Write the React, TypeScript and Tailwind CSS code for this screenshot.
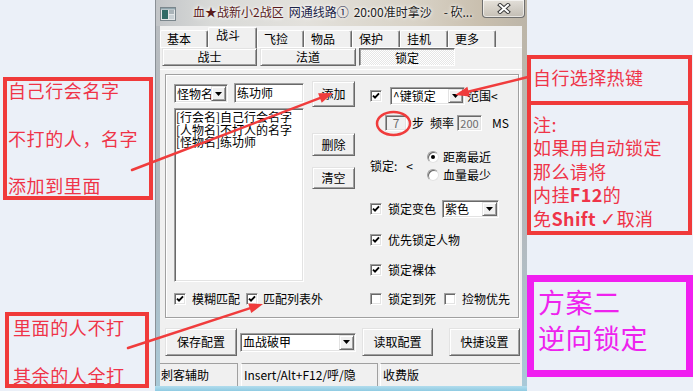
import React from "react";

const raised =
  "bg-[#f0f0f0] border border-t-[#e3e3e3] border-l-[#e3e3e3] border-r-[#696969] border-b-[#696969] shadow-[inset_1px_1px_0_#ffffff,inset_-1px_-1px_0_#a0a0a0]";
const sunken =
  "border border-t-[#a0a0a0] border-l-[#a0a0a0] border-r-white border-b-white shadow-[inset_1px_1px_0_#696969,inset_-1px_-1px_0_#e3e3e3]";

function Check({ checked }: { checked?: boolean }) {
  return (
    <span className={`w-[12px] h-[12px] shrink-0 bg-white ${sunken} flex items-center justify-center`}>
      {checked && (
        <svg width="8" height="8" viewBox="0 0 8 8">
          <path d="M1 3.6 L3 5.6 L7 1.4" stroke="#000" strokeWidth="1.9" fill="none" />
        </svg>
      )}
    </span>
  );
}

function Radio({ on }: { on?: boolean }) {
  return (
    <span className="w-[12px] h-[12px] shrink-0 rounded-full bg-white border border-t-[#a0a0a0] border-l-[#a0a0a0] border-r-[#e3e3e3] border-b-[#e3e3e3] shadow-[inset_1px_1px_0_#696969] flex items-center justify-center">
      {on && <span className="w-[4px] h-[4px] rounded-full bg-black" />}
    </span>
  );
}

function DropBtn() {
  return (
    <span className={`w-[15px] self-stretch my-[1px] mr-[1px] ${raised} flex items-center justify-center shrink-0`}>
      <svg width="7" height="4" viewBox="0 0 7 4">
        <path d="M0 0 H7 L3.5 4 Z" fill="#000" />
      </svg>
    </span>
  );
}

function CheckRow({ label, checked }: { label: string; checked?: boolean }) {
  return (
    <div className="flex items-center h-[14px] whitespace-nowrap">
      <Check checked={checked} />
      <span className="ml-[6px]">{label}</span>
    </div>
  );
}

function TitleBar() {
  return (
    <div className="h-[26px] flex items-start bg-[linear-gradient(90deg,#c2c5c8_0%,#d9dad8_15%,#e3e1dc_40%,#d8d2c6_70%,#c9bfae_88%,#bcb5a8_100%)] border-l border-[#8a9096]">
      <svg className="mt-[7px] ml-[4px]" width="16" height="14" viewBox="0 0 16 14">
        <rect x="0.5" y="0.5" width="15" height="13" fill="#e2e6e8" stroke="#7a868c" />
        <rect x="2" y="3" width="6" height="9" fill="#2f6a66" />
        <rect x="9" y="3" width="5" height="4" fill="#a9b3b8" />
        <rect x="9" y="8" width="5" height="4" fill="#c8d0d4" />
        <rect x="1" y="1" width="14" height="1.5" fill="#8fa4ac" />
      </svg>
      <div className="ml-[17px] mt-[5px] text-[12px] leading-[14px] whitespace-nowrap [text-shadow:0_0_5px_#ffffff,0_0_3px_#ffffff]">
        <span className="text-[#5a1c1c]">血★战新小2战区</span>
        <span className="ml-[5px] text-[#1c2448]">网通线路①</span>
        <span className="ml-[5px] text-[#1c1c1c]">20:00准时拿沙</span>
        <span className="ml-[12px] text-[#1c1c1c]">- 砍...</span>
      </div>
      <div className="ml-auto mr-[2px] w-[43px] h-[18px] rounded-b-[4px] border border-t-0 border-[#6e6e6e] bg-[linear-gradient(180deg,rgba(255,255,255,0.55),rgba(200,200,200,0.35))] shadow-[inset_0_0_0_1px_rgba(255,255,255,0.6)] flex items-center justify-center">
        <svg width="14" height="11" viewBox="0 0 14 11">
          <path d="M3 2 L11 9 M11 2 L3 9" stroke="#3a3a3a" strokeWidth="4" strokeLinecap="square" />
          <path d="M3 2 L11 9 M11 2 L3 9" stroke="#ffffff" strokeWidth="2" strokeLinecap="square" />
        </svg>
      </div>
    </div>
  );
}

const tabBase =
  "h-[17px] pl-[6px] flex items-center bg-[#f0f0f0] border-t border-l border-r border-t-white border-l-white border-r-[#696969] shadow-[inset_-1px_0_0_#a0a0a0] rounded-t-[2px]";

function Client() {
  return (
    <div className="w-[362px] h-[360px] bg-[#f0f0f0] flex flex-col text-[12px] leading-[14px] text-black">
      {/* tabs */}
      <div className="h-[22px] flex items-end border-b border-white">
        <div className={`${tabBase} w-[48px]`}>基本</div>
        <div className="relative z-10 -mb-px h-[21px] w-[49px] pl-[7px] bg-[#f0f0f0] border-t border-l border-r border-t-white border-l-white border-r-[#696969] shadow-[inset_-1px_0_0_#a0a0a0] rounded-t-[2px]">
          战斗
        </div>
        <div className={`${tabBase} w-[47px] pl-[4px]`}>飞捡</div>
        <div className={`${tabBase} w-[48px]`}>物品</div>
        <div className={`${tabBase} w-[48px]`}>保护</div>
        <div className={`${tabBase} w-[48px]`}>挂机</div>
        <div className={`${tabBase} w-[48px]`}>更多</div>
      </div>
      {/* sub tabs */}
      <div className="h-[19px] flex items-start">
        <div className={`ml-[2px] w-[95px] h-[18px] ${raised} flex items-center justify-center`}>战士</div>
        <div className={`ml-[3px] w-[96px] h-[18px] ${raised} flex items-center justify-center`}>法道</div>
        <div className="ml-[3px] w-[96px] h-[18px] border border-t-[#696969] border-l-[#696969] border-r-white border-b-white shadow-[inset_1px_1px_0_#a0a0a0] bg-[repeating-conic-gradient(#ffffff_0_25%,#e6e6e6_0_50%)] bg-[length:2px_2px] flex items-center justify-center pt-[1px]">
          锁定
        </div>
      </div>
      <div className="h-[7px] flex flex-col">
        <div className="mt-[2px] h-px bg-white" />
      </div>
      {/* panel */}
      <div className="ml-[5px] w-[354px] h-[244px] border border-[#a0a0a0] shadow-[inset_1px_1px_0_#ffffff,1px_1px_0_#ffffff] flex">
        {/* list column */}
        <div className="ml-[8px] w-[130px] flex flex-col">
          <div className="mt-[8px] h-[20px] flex items-start">
            <div className={`mt-[1px] w-[54px] h-[19px] bg-white ${sunken} flex items-stretch`}>
              <span className="pl-[2px] flex-1 overflow-hidden whitespace-nowrap flex items-center">怪物名</span>
              <DropBtn />
            </div>
            <div className={`ml-[6px] w-[70px] h-[20px] bg-white ${sunken} pl-[2px] flex items-center`}>练功师</div>
          </div>
          <div className={`mt-[5px] h-[174px] bg-white ${sunken} pl-[1px] pt-[2px] flex flex-col leading-[12.5px] whitespace-nowrap`}>
            <div>[行会名]自己行会名字</div>
            <div>[人物名]不打人的名字</div>
            <div>[怪物名]练功师</div>
          </div>
          <div className="mt-[11px] flex items-center h-[12px] whitespace-nowrap">
            <Check checked />
            <span className="ml-[6px]">模糊匹配</span>
            <span className="ml-[6px]">
              <Check checked />
            </span>
            <span className="ml-[5px]">匹配列表外</span>
          </div>
        </div>
        {/* buttons column */}
        <div className="ml-[8px] w-[43px] flex flex-col">
          <div className={`mt-[6px] h-[26px] ${raised} flex items-center justify-center`}>添加</div>
          <div className={`mt-[26px] h-[23px] ${raised} flex items-center justify-center`}>删除</div>
          <div className={`mt-[11px] h-[22px] ${raised} flex items-center justify-center`}>清空</div>
        </div>
        {/* right column */}
        <div className="ml-[15px] flex-1 flex flex-col whitespace-nowrap">
          <div className="mt-[12px] h-[18px] flex items-center">
            <Check checked />
            <div className={`ml-[8px] w-[75px] h-[18px] bg-white ${sunken} flex items-stretch`}>
              <span className="pl-[2px] flex-1 flex items-center">^键锁定</span>
              <DropBtn />
            </div>
            <span className="ml-[2px]">范围&lt;</span>
          </div>
          <div className="mt-[10px] h-[16px] flex items-center">
            <div className={`ml-[15px] w-[22px] h-[16px] ${sunken} flex items-center justify-center text-[#6d6d6d]`}>7</div>
            <span className="ml-[5px]">步</span>
            <span className="ml-[6px]">频率</span>
            <div className={`ml-[3px] w-[25px] h-[16px] ${sunken} flex items-center justify-center text-[#6d6d6d] text-[11px]`}>200</div>
            <span className="ml-[10px]">MS</span>
          </div>
          <div className="mt-[17px] h-[36px] flex items-center">
            <div className="w-[57px] flex items-center">
              <span>锁定:</span>
              <span className="ml-[9px]">&lt;</span>
            </div>
            <div className="flex flex-col">
              <div className="h-[18px] flex items-center">
                <Radio on />
                <span className="ml-[4px]">距离最近</span>
              </div>
              <div className="h-[18px] flex items-center">
                <Radio />
                <span className="ml-[4px]">血量最少</span>
              </div>
            </div>
          </div>
          <div className="mt-[16px] h-[18px] flex items-center">
            <Check checked />
            <span className="ml-[6px]">锁定变色</span>
            <div className={`ml-[6px] w-[57px] h-[18px] bg-white ${sunken} flex items-stretch`}>
              <span className="pl-[2px] flex-1 flex items-center">紫色</span>
              <DropBtn />
            </div>
          </div>
          <div className="mt-[15px]">
            <CheckRow label="优先锁定人物" checked />
          </div>
          <div className="mt-[16px]">
            <CheckRow label="锁定裸体" checked />
          </div>
          <div className="mt-[15px] h-[14px] flex items-center">
            <Check />
            <span className="ml-[6px]">锁定到死</span>
            <span className="ml-[8px]">
              <Check />
            </span>
            <span className="ml-[6px]">捡物优先</span>
          </div>
        </div>
      </div>
      {/* bottom buttons */}
      <div className="mt-[10px] h-[28px] flex items-center">
        <div className={`ml-[5px] w-[72px] h-[28px] ${raised} flex items-center justify-center`}>保存配置</div>
        <div className={`ml-[3px] w-[116px] h-[19px] bg-white ${sunken} flex items-stretch`}>
          <span className="pl-[2px] flex-1 flex items-center">血战破甲</span>
          <DropBtn />
        </div>
        <div className={`ml-[6px] w-[71px] h-[28px] ${raised} flex items-center justify-center`}>读取配置</div>
        <div className={`ml-[16px] w-[71px] h-[28px] ${raised} flex items-center justify-center`}>快捷设置</div>
      </div>
      {/* status bar */}
      <div className="mt-[7px] h-[23px] flex">
        <div className="w-[78px] border-t border-r border-t-[#a0a0a0] border-r-[#a0a0a0] pl-[1px] flex items-center whitespace-nowrap">刺客辅助</div>
        <div className="ml-[3px] w-[137px] border-t border-l border-r border-t-[#a0a0a0] border-l-white border-r-[#a0a0a0] pl-[2px] flex items-center whitespace-nowrap">
          Insert/Alt+F12/呼/隐
        </div>
        <div className="ml-[2px] w-[140px] border-t border-l border-t-[#a0a0a0] border-l-white pl-[2px] flex items-center">收费版</div>
      </div>
    </div>
  );
}

function Window() {
  return (
    <div className="w-[372px] shrink-0 flex flex-col">
      <TitleBar />
      <div className="h-[360px] flex">
        <div className="w-[5px] border-l border-[#8a9096] bg-[linear-gradient(180deg,#b9bdc1,#aeb6bc_55%,#a9c9d8)]" />
        <Client />
        <div className="w-[5px] bg-[linear-gradient(180deg,#bdb6a8,#b4b8bc_55%,#a9c9d8)]" />
      </div>
      <div className="h-[5px] bg-[linear-gradient(180deg,#b2dced,#8fcbe2)]" />
    </div>
  );
}

export default function App() {
  return (
    <div className="relative w-[693px] h-[391px] overflow-hidden bg-[#ebf0f8] flex font-['Noto_Sans_CJK_SC',sans-serif]">
      {/* left annotations */}
      <div className="w-[155px] shrink-0 flex flex-col text-[18px] leading-[18px] text-[#ef3448] tracking-[0.6px] whitespace-nowrap">
        <div className="mt-[77px] ml-[3px] w-[150px] h-[123px] border-[4px] border-[#f03a3a] pl-[1px] flex flex-col">
          <div>自己行会名字</div>
          <div className="mt-[30px]">不打的人，名字</div>
          <div className="mt-[29px]">添加到里面</div>
        </div>
        <div className="mt-[112px] ml-[5px] w-[144px] h-[76px] border-[4px] border-[#f03a3a] pl-[4px] pt-[2px] flex flex-col">
          <div>里面的人不打</div>
          <div className="mt-[30px]">其余的人全打</div>
        </div>
      </div>

      <Window />

      {/* right annotations */}
      <div className="flex-1 flex flex-col whitespace-nowrap">
        <div className="mt-[55px] w-[165px] h-[180px] border-[4px] border-[#f03a3a] flex flex-col text-[18px] text-[#ef3448] tracking-[0.4px]">
          <div className="h-[46px] border-b-[4px] border-[#f03a3a] pl-[2px] pt-[8px] leading-[20px]">自行选择热键</div>
          <div className="pl-[2px] pt-[8px] leading-[23.5px]">
            <div>注:</div>
            <div>如果用自动锁定</div>
            <div>那么请将</div>
            <div>
              内挂<b>F12</b>的
            </div>
            <div>
              免<b>Shift</b> <span className="font-['DejaVu_Sans',sans-serif] text-[19px]">✓</span>取消
            </div>
          </div>
        </div>
        <div className="mt-[40px] w-[166px] h-[102px] border-[7px] border-[#f01ff0] pl-[4px] pt-[2px] text-[27px] leading-[36px] text-[#ee22ee] tracking-[0.5px]">
          <div>方案二</div>
          <div>逆向锁定</div>
        </div>
      </div>

      {/* annotation arrows */}
      <svg className="absolute left-0 top-0 pointer-events-none" width="693" height="391" viewBox="0 0 693 391">
        <g stroke="#f03c3c" strokeWidth="2.5" strokeLinecap="round" fill="none">
          <line x1="132" y1="170" x2="321" y2="97.6" />
          <line x1="128" y1="348" x2="251" y2="307.9" />
          <line x1="528" y1="77" x2="467" y2="92" />
          <ellipse cx="393.5" cy="123.5" rx="16.5" ry="11.5" />
        </g>
        <g fill="#f03c3c">
          <polygon points="333,93 321.7,102.7 318.1,93.3" />
          <polygon points="263,304 251.2,313.1 248.2,303.6" />
          <polygon points="455,95 469.8,96.5 467.4,86.8" />
        </g>
      </svg>
    </div>
  );
}
